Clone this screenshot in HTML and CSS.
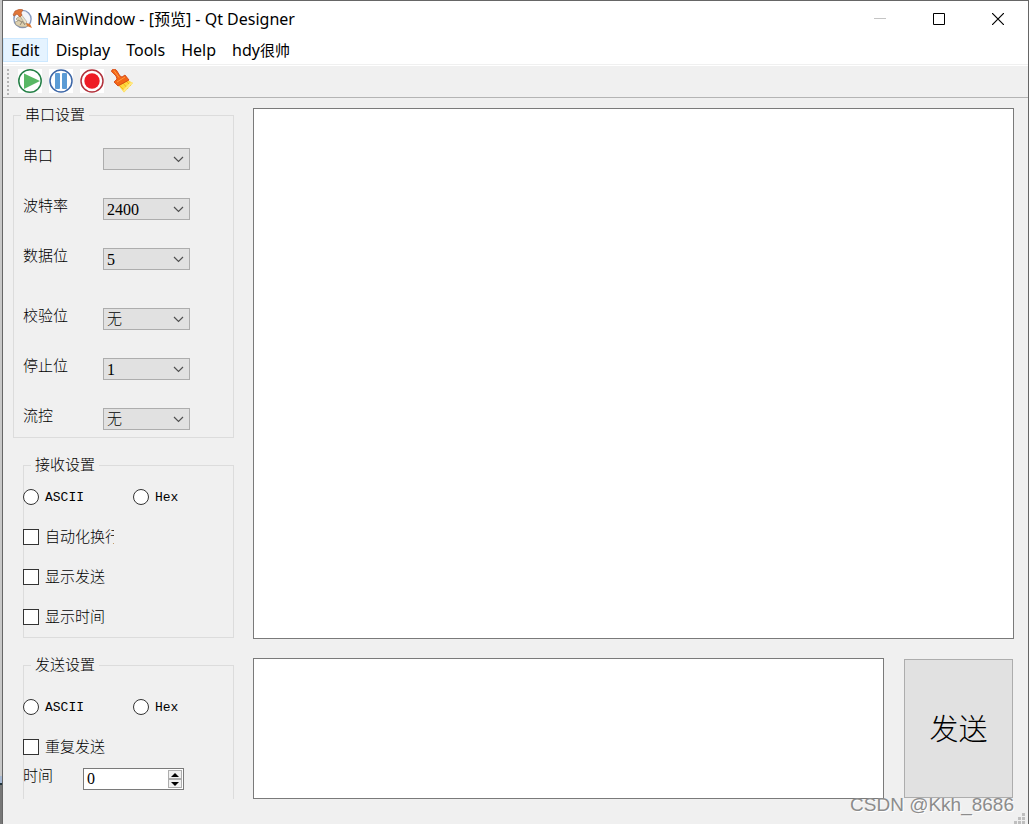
FILE: index.html
```html
<!DOCTYPE html>
<html lang="zh-CN">
<head>
<meta charset="utf-8">
<title>MainWindow - [预览] - Qt Designer</title>
<link rel="stylesheet" href="styles.css">
</head>
<body>
<svg class="symbols" aria-hidden="true">
  <symbol id="chevron" viewBox="0 0 11 7"><path d="M1 1l4.500 4.500L10 1" fill="none" stroke="#505050" stroke-width="1.200"/></symbol>
</svg>
<div class="window">
  <header class="titlebar">
    <svg class="app-icon" viewBox="0 0 20 20" aria-hidden="true">
      <circle cx="10.500" cy="10" r="8.600" fill="#f4f5f8" stroke="#8799bd" stroke-width="1.400"/>
      <path d="M5 9l3-2 6 7 3 2-3 2-5 0-5-2-1-3 3-1-2-2z" fill="#dccfae" stroke="#948b79" stroke-width=".6"/>
      <path d="M9 5l6 8-2 2-5-8z" fill="#eee4c8" stroke="#8b8b8b" stroke-width=".5"/>
      <path d="M1 6l2-4 5-2 3 1-2 3 1 2-2 2-3-3-3 2z" fill="#e07638" stroke="#a95228" stroke-width=".6"/>
      <path d="M14 14l4 1 2 4-5-2z" fill="#d97835"/>
      <path d="M6 11l4 2-2 3M10 12l3 4" fill="none" stroke="#817867" stroke-width=".8"/>
    </svg>
    <h1 class="title">MainWindow - [预览] - Qt Designer</h1>
    <div class="window-controls">
      <button class="window-button" aria-label="Minimize" disabled><svg viewBox="0 0 12 12"><path d="M0 5.500h12" stroke="#c4c4c4"/></svg></button>
      <button class="window-button" aria-label="Maximize"><svg viewBox="0 0 12 12"><path d="M.5.5h11v11H.5z" fill="none" stroke="#000"/></svg></button>
      <button class="window-button" aria-label="Close"><svg viewBox="0 0 12 12"><path d="M0 0l12 12M12 0L0 12" stroke="#000" stroke-width="1.200"/></svg></button>
    </div>
  </header>
  <nav class="menubar">
    <button class="menu menu-active">Edit</button>
    <button class="menu">Display</button>
    <button class="menu">Tools</button>
    <button class="menu">Help</button>
    <button class="menu">hdy<span class="menu-cjk">很帅</span></button>
  </nav>
  <div class="toolbar">
    <span class="handle"></span>
    <button class="tool" aria-label="Start"><svg viewBox="0 0 24 24"><path d="M0 0h24v24H0z" fill="#fff"/><circle cx="12" cy="12" r="11.200" fill="#fff" stroke="#258047" stroke-width="1.500"/><path d="M6 4.500l16 7.500-16 8z" fill="#58b864"/></svg></button>
    <button class="tool" aria-label="Pause"><svg viewBox="0 0 24 24"><path d="M0 0h24v24H0z" fill="#fff"/><circle cx="12" cy="12" r="11" fill="#fff" stroke="#3c66a7" stroke-width="1.500"/><rect x="6" y="4" width="5" height="16" rx="1" fill="#5b9bd5"/><rect x="13" y="4" width="5" height="16" rx="1" fill="#5b9bd5"/></svg></button>
    <button class="tool" aria-label="Record"><svg viewBox="0 0 24 24"><path d="M0 0h24v24H0z" fill="#fff"/><circle cx="12" cy="12" r="11" fill="#fff" stroke="#b1303a" stroke-width="1.500"/><circle cx="12" cy="12" r="7.700" fill="#ee1c25"/></svg></button>
    <button class="tool" aria-label="Clear"><svg viewBox="0 0 24 24"><path d="M7 16l8-6 7 4-9 9.500z" fill="#ffd83d"/><path d="M9 17l5 5M12 14l5 6M15 12l5 5" stroke="#f3b51c" fill="none"/><path d="M12 21l8-8 2 1-9 9z" fill="#ffe883"/><path d="M1 1c1-1.500 4-1 5 1l3 5 2 1 3-2 4 5-11 6-4-4 3-3-1-3-4-4c-1-.5-.5-1.500 0-2z" fill="#f36616" stroke="#cf3d0d" stroke-width=".8"/><path d="M3 1.500l5 7M6 13l8-5" stroke="#ff9b40" fill="none"/></svg></button>
  </div>
  <main class="content">
    <div class="sidebar">
      <fieldset class="group group-serial">
        <legend>串口设置</legend>
        <div class="row"><label for="port">串口</label><span class="combo"><select id="port"><option></option></select><svg><use href="#chevron"/></svg></span></div>
        <div class="row"><label for="baud">波特率</label><span class="combo"><select id="baud" class="digits"><option>2400</option></select><svg><use href="#chevron"/></svg></span></div>
        <div class="row"><label for="data">数据位</label><span class="combo"><select id="data" class="digits"><option>5</option></select><svg><use href="#chevron"/></svg></span></div>
        <div class="row row-apart"><label for="parity">校验位</label><span class="combo"><select id="parity"><option>无</option></select><svg><use href="#chevron"/></svg></span></div>
        <div class="row"><label for="stop">停止位</label><span class="combo"><select id="stop" class="digits"><option>1</option></select><svg><use href="#chevron"/></svg></span></div>
        <div class="row"><label for="flow">流控</label><span class="combo"><select id="flow"><option>无</option></select><svg><use href="#chevron"/></svg></span></div>
      </fieldset>
      <fieldset class="group group-receive">
        <legend>接收设置</legend>
        <div class="choices">
          <label class="choice latin"><input type="radio" name="receive">ASCII</label>
          <label class="choice latin"><input type="radio" name="receive">Hex</label>
        </div>
        <label class="choice"><input type="checkbox">自动化换行</label>
        <label class="choice"><input type="checkbox">显示发送</label>
        <label class="choice"><input type="checkbox">显示时间</label>
      </fieldset>
      <fieldset class="group group-send">
        <legend>发送设置</legend>
        <div class="choices">
          <label class="choice latin"><input type="radio" name="send">ASCII</label>
          <label class="choice latin"><input type="radio" name="send">Hex</label>
        </div>
        <label class="choice"><input type="checkbox">重复发送</label>
        <div class="time-row">
          <label for="time">时间</label>
          <span class="spin">
            <input id="time" class="digits" type="text" inputmode="numeric" value="0">
            <span class="steps">
              <button aria-label="Increase"><svg viewBox="0 0 8 4"><path d="M0 4l4-4 4 4z"/></svg></button>
              <button aria-label="Decrease"><svg viewBox="0 0 8 4"><path d="M0 0l4 4 4-4z"/></svg></button>
            </span>
          </span>
        </div>
      </fieldset>
    </div>
    <textarea class="pane" aria-label="接收" readonly></textarea>
    <div class="composer">
      <textarea class="pane" aria-label="发送内容"></textarea>
      <button class="send">发送</button>
    </div>
  </main>
  <span class="watermark">CSDN @Kkh_8686</span>
  <svg class="grip" viewBox="0 0 11 11" aria-hidden="true"><path d="M8 0h3v3H8zM4 4h3v3H4zM8 4h3v3H8zM0 8h3v3H0zM4 8h3v3H4zM8 8h3v3H8z" fill="#bfbfbf"/></svg>
</div>
</body>
</html>
```
FILE: styles.css
```css
* { box-sizing: border-box; }

body {
  margin: 0;
  padding-left: 2px;
  background: linear-gradient(#c8c8c8 0 776px, #a6b8d2 776px 783px, #20333b 783px 785px, #777 785px);
  color: #000;
  font: 300 15px/15px "Liberation Serif", "Noto Sans CJK SC", sans-serif;
}

button, input, select, textarea {
  margin: 0;
  padding: 0;
  border: 0;
  border-radius: 0;
  background: none;
  color: inherit;
  font: inherit;
  appearance: none;
}

svg { display: block; }

.symbols { position: absolute; width: 0; height: 0; }

.window {
  position: relative;
  display: flex;
  flex-direction: column;
  min-height: 100vh;
  border: 1px solid #666;
  border-bottom: 0;
  background: #f0f0f0;
}

.titlebar {
  display: flex;
  align-items: flex-start;
  height: 37px;
  padding: 0 1px 0 9px;
  background: #fff;
}

.app-icon { width: 20px; height: 20px; margin-top: 8px; }

.title {
  flex: 1;
  margin: 0 0 0 5px;
  font: 400 16px/36px "Noto Sans", "Noto Sans CJK SC", sans-serif;
}

.window-controls { display: flex; }

.window-button {
  display: grid;
  place-items: center;
  width: 59px;
  height: 36px;
}

.window-button svg { width: 12px; height: 12px; }

.menubar {
  display: flex;
  height: 27px;
  padding-bottom: 2px;
  border-bottom: 1px solid #f0f0f0;
  background: #fff;
}

.menu {
  padding: 0 7px;
  border: 1px solid transparent;
  font: 400 16px/22px "Noto Sans", "Noto Sans CJK SC", sans-serif;
}

.menu-cjk { font-size: 15px; }

.menu-active { border-color: #cce8ff; background: #e5f3ff; }

.toolbar {
  display: flex;
  align-items: flex-start;
  gap: 7px;
  height: 33px;
  padding: 3px 0 0 4px;
  border-top: 1px solid #fff;
  border-bottom: 1px solid #b4b4b4;
}

.handle {
  width: 2px;
  height: 26px;
  margin-right: 2px;
  background: repeating-linear-gradient(#b4b4b4 0 2px, transparent 2px 4px);
}

.tool svg { width: 24px; height: 24px; }

.content {
  flex: 1;
  display: grid;
  grid-template: minmax(530px, 1fr) 141px / 221px 1fr;
  gap: 19px;
  padding: 10px 14px 25px 10px;
}

.sidebar {
  grid-row: 1 / 3;
  display: flex;
  flex-direction: column;
  gap: 20px;
  height: 691px;
}

.group {
  min-width: 0;
  margin: 0;
  border: 1px solid #dcdcdc;
}

.group legend { padding: 0 4px; }

.group-serial {
  height: 330px;
  padding: 25px 0 0 9px;
}

.group-serial legend { margin-left: -2px; }

.row {
  display: flex;
  align-items: flex-start;
  margin-bottom: 28px;
}

.row label, .time-row label { line-height: 17px; }
.row label { width: 80px; }
.row-apart { margin-top: 38px; }

.combo { position: relative; width: 87px; }

.combo select {
  width: 100%;
  height: 22px;
  padding-left: 3px;
  border: 1px solid #adadad;
  background: #e1e1e1;
}

.combo svg {
  position: absolute;
  top: 8px;
  right: 6px;
  width: 11px;
  height: 7px;
  pointer-events: none;
}

.digits { font-size: 16px; }

.group-receive, .group-send {
  margin-left: 10px;
  padding: 0;
}

.group-receive { height: 180px; }
.group-send { height: 142px; border-bottom: 0; }
.group-receive legend, .group-send legend { margin-left: 7px; }

.choices { display: flex; padding-top: 16px; }
.group-send .choices { padding-top: 26px; }

.choice {
  display: flex;
  align-items: center;
  gap: 6px;
  width: 91px;
  height: 16px;
  margin: 0 0 24px -1px;
  line-height: 17px;
  overflow: hidden;
  white-space: nowrap;
}

.choices .choice + .choice { margin-left: 19px; }
.group-send > .choice { margin-bottom: 13px; }

.latin { font-family: "Liberation Mono", monospace; font-size: 13px; }

.choice input {
  flex: none;
  width: 16px;
  height: 16px;
  border: 1px solid #333;
  background: #fff;
}

.choice input[type="radio"] { border-radius: 50%; }

.time-row { display: flex; margin-left: -1px; }
.time-row label { width: 60px; }

.spin {
  display: flex;
  width: 101px;
  height: 22px;
  padding: 1px;
  border: 1px solid #7a7a7a;
  background: #fff;
}

.spin input { flex: 1; min-width: 0; padding-left: 2px; }
.steps { display: flex; flex-direction: column; width: 14px; }

.steps button {
  flex: 1;
  display: grid;
  place-items: center;
  border: 1px solid #adadad;
  background: #f0f0f0;
}

.steps svg { width: 8px; height: 4px; }

.pane {
  width: 100%;
  height: 100%;
  padding: 4px;
  border: 1px solid #7a7a7a;
  background: #fff;
  resize: none;
}

.composer { display: flex; gap: 20px; }
.composer .pane { flex: 1; }

.send {
  width: 109px;
  margin: 1px 1px 1px 0;
  padding-bottom: 4px;
  border: 1px solid #adadad;
  background: #e1e1e1;
  font: 300 29px/36px "Noto Sans CJK SC", sans-serif;
}

.watermark {
  position: absolute;
  right: 14px;
  bottom: 8px;
  color: #8c8c8c;
  font: 400 19px/22px "Liberation Sans", sans-serif;
  text-shadow: 1px 1px #fff;
  pointer-events: none;
}

.grip {
  position: absolute;
  right: 3px;
  bottom: 0;
  width: 11px;
  height: 11px;
}
```
